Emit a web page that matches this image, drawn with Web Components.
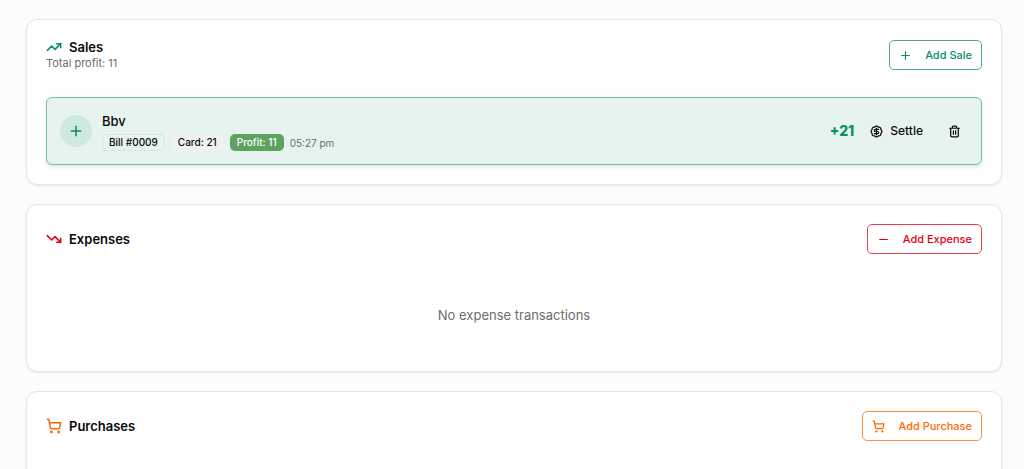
<!DOCTYPE html>
<html lang="en">
<head>
<meta charset="utf-8">
<meta name="viewport" content="width=device-width, initial-scale=1">
<title>Transactions</title>
<style>
  :root {
    --ink: #0a0a0a; --muted: #6b6e6d; --line: #e6e6e6;
    --green: #0a8f62; --red: #e40014; --orange: #ff6a00;
  }
  body { margin: 0; background: #fcfcfc; color: var(--ink); font-family: Inter, "Liberation Sans", sans-serif; font-size: 12px; line-height: 16px; }
</style>
</head>
<body>
<ledger-page>
  <ledger-section icon="up" heading="Sales" note="Total profit: 11" style="--accent: var(--green)">
    <action-button slot="action" icon="plus" style="--accent: var(--green)">Add Sale</action-button>
    <sale-row name="Bbv" amount="+21">
      <tag-badge kind="outline">Bill #0009</tag-badge>
      <tag-badge kind="soft">Card: 21</tag-badge>
      <tag-badge kind="solid">Profit: 11</tag-badge>
      <time slot="time" datetime="17:27">05:27 pm</time>
    </sale-row>
  </ledger-section>
  <ledger-section icon="down" heading="Expenses" style="--accent: var(--red)">
    <action-button slot="action" icon="minus" style="--accent: var(--red)">Add Expense</action-button>
    <empty-note>No expense transactions</empty-note>
  </ledger-section>
  <ledger-section icon="cart" heading="Purchases" style="--accent: var(--orange)">
    <action-button slot="action" icon="cart" style="--accent: var(--orange)">Add Purchase</action-button>
  </ledger-section>
</ledger-page>
<script>
const ICONS = {
  up: '<path d="M16 7h6v6"/><path d="m22 7-8.500 8.500-5-5L2 17"/>',
  down: '<path d="M16 17h6v-6"/><path d="m22 17-8.500-8.500-5 5L2 7"/>',
  plus: '<path d="M5 12h14M12 5v14"/>',
  minus: '<path d="M5 12h14"/>',
  cart: '<circle cx="8" cy="21" r="1"/><circle cx="19" cy="21" r="1"/><path d="M2.050 2.050h2l2.660 12.420a2 2 0 0 0 2 1.580h9.780a2 2 0 0 0 1.950-1.570l1.650-7.430H5.120"/>',
  dollar: '<path d="M3.850 8.620a4 4 0 0 1 4.780-4.770 4 4 0 0 1 6.740 0 4 4 0 0 1 4.780 4.780 4 4 0 0 1 0 6.740 4 4 0 0 1-4.770 4.780 4 4 0 0 1-6.750 0 4 4 0 0 1-4.780-4.770 4 4 0 0 1 0-6.760Z"/><path d="M16 8h-6a2 2 0 1 0 0 4h4a2 2 0 1 1 0 4H8M12 18V6"/>',
  trash: '<path d="M3 6h18M19 6v14a2 2 0 0 1-2 2H7a2 2 0 0 1-2-2V6M8 6V4a2 2 0 0 1 2-2h4a2 2 0 0 1 2 2v2M10 11v6M14 11v6"/>'
};

class BaseElement extends HTMLElement {
  connectedCallback() {
    if (this.shadowRoot) return;
    this.attachShadow({ mode: 'open' }).innerHTML = this.view();
  }
  attr(name) { return this.getAttribute(name) || ''; }
}

customElements.define('line-icon', class extends BaseElement {
  view() {
    return `<style>
      :host { display: block; flex: none; width: 13px; height: 13px; }
      svg { display: block; width: 100%; height: 100%; fill: none; stroke: currentColor; stroke-width: 2.300; stroke-linecap: round; stroke-linejoin: round; }
    </style><svg viewBox="0 0 24 24" aria-hidden="true">${ICONS[this.attr('name')]}</svg>`;
  }
});

customElements.define('ledger-page', class extends BaseElement {
  view() {
    return `<style>
      :host { display: block; }
      main { display: flex; flex-direction: column; gap: 19px; padding: 19px 22px 0 26px; }
    </style><main><slot></slot></main>`;
  }
});

customElements.define('ledger-section', class extends BaseElement {
  view() {
    const note = this.attr('note');
    return `<style>
      :host { display: block; }
      section { display: flex; flex-direction: column; gap: 26px; padding: 19px; background: #fff; border: 1px solid var(--line); border-radius: 11px; box-shadow: 0 1px 2px rgb(0 0 0 / .08); }
      :host(:last-child) section { padding-bottom: 98px; }
      header { display: flex; align-items: center; justify-content: space-between; }
      .title { display: flex; align-items: center; gap: 7px; }
      line-icon { color: var(--accent); width: 16px; height: 16px; }
      h2 { margin: 0; font-size: 13px; line-height: 16px; font-weight: 600; }
      p { margin: 0; font-size: 11px; line-height: 16px; color: var(--muted); }
    </style>
    <section>
      <header>
        <div>
          <div class="title"><line-icon name="${this.attr('icon')}"></line-icon><h2>${this.attr('heading')}</h2></div>
          ${note ? `<p>${note}</p>` : ''}
        </div>
        <slot name="action"></slot>
      </header>
      <slot></slot>
    </section>`;
  }
});

customElements.define('action-button', class extends BaseElement {
  view() {
    return `<style>
      :host { display: block; }
      button { display: flex; align-items: center; gap: 13px; height: 30px; padding: 0 9px; font: 500 11px/16px Inter, "Liberation Sans", sans-serif; color: var(--accent); background: #fff; border: 1px solid color-mix(in srgb, var(--accent) 75%, white); border-radius: 5px; cursor: pointer; }
    </style><button type="button"><line-icon name="${this.attr('icon')}"></line-icon><span><slot></slot></span></button>`;
  }
});

customElements.define('tag-badge', class extends BaseElement {
  view() {
    return `<style>
      :host { display: block; }
      span { display: block; padding: 0 6px; font-size: 10px; line-height: 15px; font-weight: 500; border: 1px solid transparent; border-radius: 5px; }
      .outline { border-color: #d9e8e2; }
      .soft { background: #f0f2f1; }
      .solid { background: #5da260; color: #fff; }
    </style><span class="${this.attr('kind')}"><slot></slot></span>`;
  }
});

customElements.define('sale-row', class extends BaseElement {
  view() {
    return `<style>
      :host { display: block; }
      article { display: flex; align-items: center; gap: 10px; min-height: 66px; padding: 0 12px 0 13px; background: #e6f3ee; border: 1px solid #76bfa4; border-radius: 6px; box-shadow: 0 2px 4px rgb(0 0 0 / .1); }
      .mark { display: grid; place-items: center; flex: none; width: 32px; height: 32px; border-radius: 50%; background: #cee9df; color: var(--green); }
      .mark line-icon { width: 16px; height: 16px; }
      .info { flex: 1; min-width: 0; }
      h3 { margin: 0 0 3px; font-size: 13px; line-height: 20px; font-weight: 500; }
      .meta { display: flex; flex-wrap: wrap; align-items: center; gap: 6px; }
      ::slotted(time) { font-size: 10px; line-height: 16px; color: var(--muted); }
      .end { display: flex; align-items: center; gap: 7px; }
      strong { font-size: 14px; line-height: 20px; font-weight: 800; color: var(--green); }
      button { display: flex; align-items: center; justify-content: center; gap: 7px; height: 30px; padding: 0 9px; font: 500 12px/16px Inter, "Liberation Sans", sans-serif; color: var(--ink); background: none; border: 0; border-radius: 5px; cursor: pointer; }
      .icon-only { width: 30px; padding: 0; }
    </style>
    <article>
      <div class="mark"><line-icon name="plus"></line-icon></div>
      <div class="info">
        <h3>${this.attr('name')}</h3>
        <div class="meta"><slot></slot><slot name="time"></slot></div>
      </div>
      <div class="end">
        <strong>${this.attr('amount')}</strong>
        <button type="button"><line-icon name="dollar"></line-icon>Settle</button>
        <button type="button" class="icon-only" aria-label="Delete"><line-icon name="trash"></line-icon></button>
      </div>
    </article>`;
  }
});

customElements.define('empty-note', class extends BaseElement {
  view() {
    return `<style>
      :host { display: block; }
      p { margin: 0; padding: 26px 0 28px; text-align: center; font-size: 13px; line-height: 18px; color: var(--muted); }
    </style><p><slot></slot></p>`;
  }
});
</script>
</body>
</html>
